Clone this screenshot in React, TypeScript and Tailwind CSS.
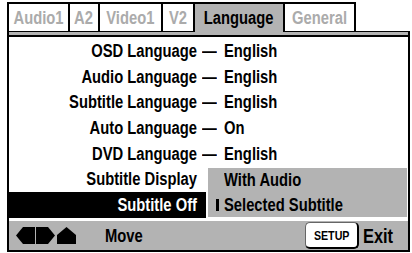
import React from 'react';

const rows = [
  { label: 'OSD Language', value: 'English', dash: true },
  { label: 'Audio Language', value: 'English', dash: true },
  { label: 'Subtitle Language', value: 'English', dash: true },
  { label: 'Auto Language', value: 'On', dash: true },
  { label: 'DVD Language', value: 'English', dash: true },
  { label: 'Subtitle Display', value: '', dash: false },
  { label: 'Subtitle Off', value: '', dash: false, active: true },
];

const tabs = [
  { name: 'Audio1', w: 'w-[61px]' },
  { name: 'A2', w: 'w-[30px]' },
  { name: 'Video1', w: 'w-[63px]' },
  { name: 'V2', w: 'w-[32px]' },
  { name: 'Language', w: 'w-[90px]', active: true },
  { name: 'General', w: 'w-[73px]', last: true },
];

// condensed look: Liberation Sans squeezed horizontally
function N({ children, o = 'origin-left' }: { children: React.ReactNode; o?: string }) {
  return <span className={`inline-block whitespace-nowrap scale-x-[0.82] ${o}`}>{children}</span>;
}

function NavIcons() {
  return (
    <svg width="60" height="18" viewBox="0 0 60 18" className="shrink-0">
      <polygon points="0,8.5 7,0 19,0 19,17 7,17" fill="#000" />
      <polygon points="20,0 32,0 39,8.5 32,17 20,17" fill="#000" />
      <polygon points="41,17 41,8 50.5,0 60,8 60,17" fill="#000" />
    </svg>
  );
}

export default function App() {
  return (
    <div className="w-[412px] h-[253px] bg-white overflow-hidden font-['Liberation_Sans',Arial,sans-serif] font-bold text-black">
      <div className="ml-[7px] pt-[2px] w-[403px]">
        {/* Tabs */}
        <div className="flex h-[30px]">
          {tabs.map((t) => (
            <div
              key={t.name}
              className={`${t.w} flex items-center justify-center border-t-2 border-l-2 border-black text-[18px] leading-none ${
                t.active ? 'bg-[#b3b3b3] text-black' : 'bg-white text-[#ababab] border-b'
              } ${t.last ? 'border-r-2' : ''}`}
            >
              <N o="origin-center">{t.name}</N>
            </div>
          ))}
          <div className="flex-1 border-b border-black" />
        </div>
        {/* Strip */}
        <div className="h-[5px] bg-[#b3b3b3] border-b-2 border-r-2 border-l-2 border-black" />

        {/* Body */}
        <div className="relative h-[184px] border-x-2 border-black pt-[1.5px] bg-white">
          {rows.map((r) => (
            <div key={r.label} className="flex h-[25.6px] items-center text-[18px] leading-none">
              <div
                className={`w-[188px] h-full flex items-center justify-end ${
                  r.active ? 'bg-black text-white' : ''
                }`}
              >
                <N o="origin-right">{r.label}</N>
              </div>
              <div className="w-[27px] h-full flex items-center">
                {r.active ? (
                  <div className="w-[9px] h-full bg-black" />
                ) : r.dash ? (
                  <span className="pl-[5px]">
                    <N>—</N>
                  </span>
                ) : null}
              </div>
              <div>
                <N>{r.value}</N>
              </div>
            </div>
          ))}

          {/* Sub menu */}
          <div className="absolute left-[199px] top-[131px] w-[199px] h-[49px] bg-[#b3b3b3] text-[18px] leading-none">
            <div className="h-[24.5px] flex items-center pl-[16px]">
              <N>With Audio</N>
            </div>
            <div className="h-[24.5px] flex items-center pl-[8px]">
              <span className="w-[3px] h-[12px] bg-black mr-[5px]" />
              <N>Selected Subtitle</N>
            </div>
          </div>
        </div>

        {/* Bottom bar */}
        <div className="h-[31px] bg-[#b3b3b3] border-x-2 border-b-2 border-black flex items-center pl-[7px]">
          <NavIcons />
          <span className="ml-[29px] text-[18px] leading-none">
            <N>Move</N>
          </span>
          <div className="ml-auto w-[54px] h-[27px] bg-white rounded-[5px] border border-[#666] border-r-2 border-b-2 border-r-black border-b-black flex items-center justify-center text-[13px] leading-none">
            <N o="origin-center">SETUP</N>
          </div>
          <span className="ml-[4px] mr-[8px] text-[20px] leading-none">
            <N>Exit</N>
          </span>
        </div>
      </div>
    </div>
  );
}
